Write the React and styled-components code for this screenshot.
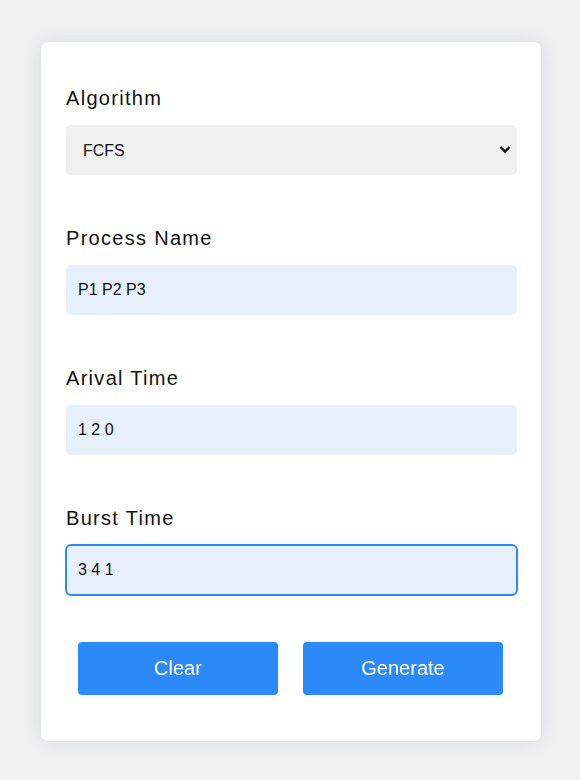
import React, { useState } from 'react'
import styled, { createGlobalStyle } from 'styled-components'

const GlobalStyle = createGlobalStyle`
  body {
    margin: 0;
    background: #f0f0f1;
    font-family: "Liberation Sans", Arial, sans-serif;
  }
`

const Page = styled.div`
  display: flex;
  justify-content: center;
  padding: 42px 0 39px 2px;
`

const Card = styled.form`
  width: 500px;
  box-sizing: border-box;
  background: #fff;
  border-radius: 7px;
  box-shadow: 0 0 18px rgba(40, 60, 100, 0.12);
  padding: 45px 24px 46px 25px;
  display: flex;
  flex-direction: column;
  gap: 52px;
`

const Field = styled.div`
  display: flex;
  flex-direction: column;
  gap: 15px;
`

const Label = styled.label`
  font-size: 20px;
  line-height: 23px;
  letter-spacing: 1.3px;
  color: #111;
`

const SelectWrap = styled.div`
  position: relative;
  height: 50px;
`

const Select = styled.select`
  appearance: none;
  width: 100%;
  height: 100%;
  border: none;
  outline: none;
  border-radius: 5px;
  background: #f0f0f0;
  padding: 0 0 0 17px;
  font-family: inherit;
  font-size: 16px;
  color: #111;
`

const Chevron = styled.svg`
  position: absolute;
  right: 5px;
  top: 20px;
  pointer-events: none;
`

const Input = styled.input`
  height: 50px;
  box-sizing: border-box;
  border: none;
  border-radius: 5px;
  background: #e8f0fe;
  padding: 0 12px;
  font-family: inherit;
  font-size: 16px;
  color: #111;
  outline: ${(p) => (p.$active ? '2px solid #2b8af7' : 'none')};
  outline-offset: -1px;
  caret-color: #2b8af7;
  &:focus {
    outline: 2px solid #2b8af7;
  }
`

const Buttons = styled.div`
  display: flex;
  gap: 25px;
  padding: 0 12px;
  margin-top: -5px;
`

const Button = styled.button`
  width: 200px;
  height: 53px;
  border: none;
  border-radius: 4px;
  background: #2b8af7;
  color: #fff;
  font-family: inherit;
  font-size: 20px;
  cursor: pointer;
`

const App = () => {
  const [algo, setAlgo] = useState('FCFS')
  const [names, setNames] = useState('P1 P2 P3')
  const [arrival, setArrival] = useState('1 2 0')
  const [burst, setBurst] = useState('3 4 1')

  const clear = () => {
    setNames('')
    setArrival('')
    setBurst('')
  }

  return (
    <>
      <GlobalStyle />
      <Page>
        <Card onSubmit={(e) => e.preventDefault()}>
          <Field>
            <Label>Algorithm</Label>
            <SelectWrap>
              <Select value={algo} onChange={(e) => setAlgo(e.target.value)}>
                <option>FCFS</option>
                <option>SJF</option>
                <option>SRTF</option>
                <option>Round Robin</option>
                <option>Priority</option>
              </Select>
              <Chevron width="14" height="9" viewBox="0 0 14 9">
                <path d="M2.5 2 L7 6.5 L11.5 2" fill="none" stroke="#111" strokeWidth="2.4" />
              </Chevron>
            </SelectWrap>
          </Field>
          <Field>
            <Label>Process Name</Label>
            <Input value={names} onChange={(e) => setNames(e.target.value)} />
          </Field>
          <Field>
            <Label>Arival Time</Label>
            <Input value={arrival} onChange={(e) => setArrival(e.target.value)} />
          </Field>
          <Field>
            <Label>Burst Time</Label>
            <Input $active autoFocus value={burst} onChange={(e) => setBurst(e.target.value)} />
          </Field>
          <Buttons>
            <Button type="button" onClick={clear}>Clear</Button>
            <Button type="submit">Generate</Button>
          </Buttons>
        </Card>
      </Page>
    </>
  )
}

export default App
